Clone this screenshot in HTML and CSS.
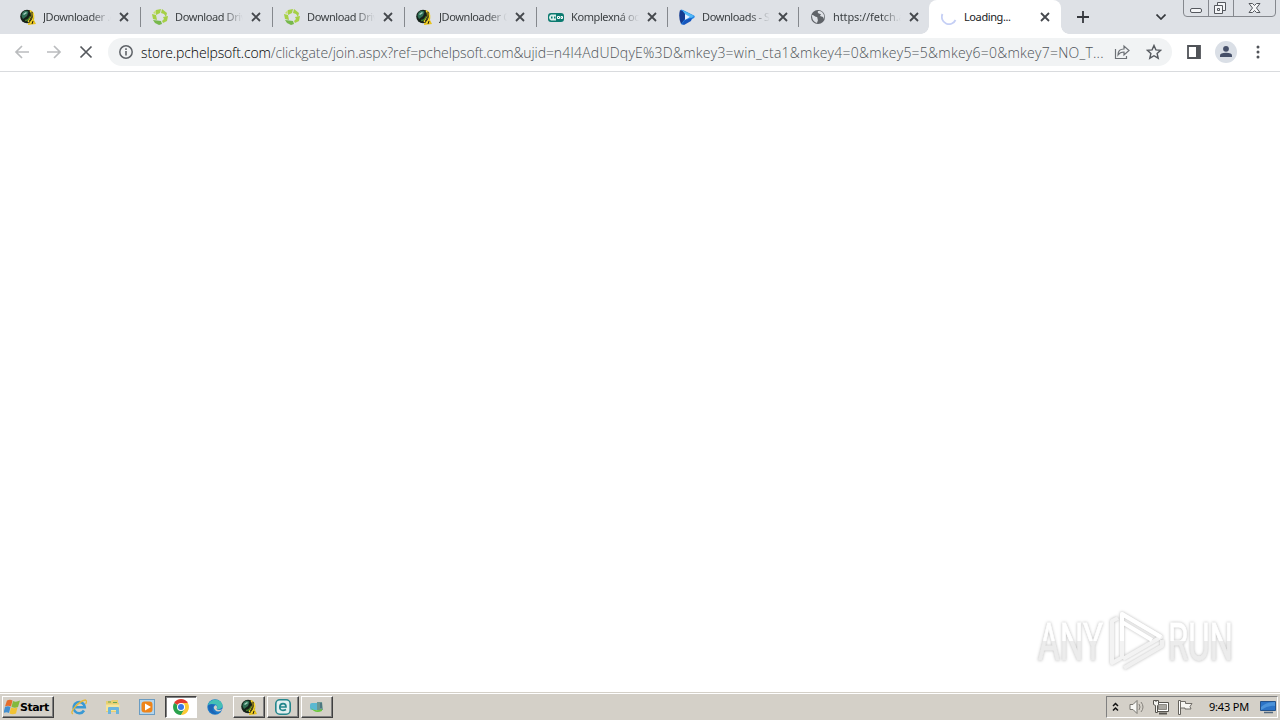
FILE: index.html
```html
<!DOCTYPE html>
<html lang="en">
<head>
    <meta charset="UTF-8">
    <title>Loading...</title>
    <link rel="stylesheet" href="styles.css">
</head>
<body>

<svg class="defs">
    <symbol id="close" viewBox="0 0 10 10"><path d="M1 1l8 8M9 1l-8 8" fill="none" stroke="#45484d" stroke-width="1.8"/></symbol>
    <symbol id="jd" viewBox="0 0 16 16">
        <path d="M9 1c5 0 6 6 5 10l2 4-8 1z" fill="#e8c21c"/>
        <circle cx="7" cy="7.500" r="6.800" fill="#152019"/>
        <path d="M1.500 7C2 1 7 1 8.500 3L7 7l-4 3z" fill="#2f6f55"/>
        <path d="M3 5l3-2 1 1-3 2z" fill="#a5d1c0"/>
        <path d="M5 11.500q4 0 5-4" fill="none" stroke="#3f7a28" stroke-width="1.500"/>
        <path d="M10 1.500c3 3 2 7-2 11.500M13 4c1.500 4 0 7-3 10" fill="none" stroke="#f5d52b" stroke-width="1.400"/>
        <path d="M12 3q1 4-2.500 9M12 15l1-3" fill="none" stroke="#24210b"/>
    </symbol>
    <symbol id="driver" viewBox="0 0 16 16">
        <g fill="#a5d046">
            <path d="M4 1l5-1-1 4-4 2z"/>
            <path d="M10 0l5 4-1 4-2-3-3-1z"/>
            <path d="M11 8l5-1-1 5-4 2-1-2 2-2z"/>
            <path d="M0 5l4 1 1 5-4-1z"/>
        </g>
        <path d="M1 11l4 .5 4 .5 1 3-3 1-4-2z" fill="#77b84b"/>
        <path d="M1 4l3-3-.5 4z" fill="#c5df6a"/>
    </symbol>
</svg>

<div class="browser">
    <div class="tabs">
        <div class="tab wide">
            <svg class="favicon"><use href="#jd"/></svg>
            <span class="title">JDownloader .org</span>
            <svg class="close"><use href="#close"/></svg>
        </div>
        <div class="tab wide">
            <svg class="favicon"><use href="#driver"/></svg>
            <span class="title">Download Driver</span>
            <svg class="close"><use href="#close"/></svg>
        </div>
        <div class="tab wide">
            <svg class="favicon"><use href="#driver"/></svg>
            <span class="title">Download Driver</span>
            <svg class="close"><use href="#close"/></svg>
        </div>
        <div class="tab wide">
            <svg class="favicon"><use href="#jd"/></svg>
            <span class="title">JDownloader Of</span>
            <svg class="close"><use href="#close"/></svg>
        </div>
        <div class="tab">
            <svg class="favicon" viewBox="0 0 16 16">
                <rect y="4" width="16" height="9" rx="3" fill="#0b7a70"/>
                <path d="M3 5.500h5v6H3q-2-1-2-3t2-3z" fill="#d9eeeb"/>
                <path d="M3 8.500h1.500M6 8.500h1.500" stroke="#0b7a70" stroke-width="2"/>
                <path d="M9.500 7.500h2v2h-2zM13 7.500h1.500v2H13z" fill="none" stroke="#fff"/>
            </svg>
            <span class="title">Komplexná ochr</span>
            <svg class="close"><use href="#close"/></svg>
        </div>
        <div class="tab">
            <svg class="favicon" viewBox="0 0 16 16">
                <path d="M2 1Q1 0 4 1l10 5q3 1 1 3L5 15q-3 2-3-1z" fill="#2687e8"/>
                <path d="M1 1l5 2v7l-4 5Q-1 8 1 1z" fill="#143b91"/>
                <path d="M3 1l12 6-3 2-6-4z" fill="#51b9f5"/>
                <path d="M6 5l5 3-5 3z" fill="#e3efff"/>
                <path d="M3 15l3-4 7-2-1 3-7 4z" fill="#1756bd"/>
            </svg>
            <span class="title">Downloads - Se</span>
            <svg class="close"><use href="#close"/></svg>
        </div>
        <div class="tab last">
            <svg class="favicon" viewBox="0 0 16 16">
                <circle cx="8" cy="8" r="7" fill="#5f6368"/>
                <path d="M2 6c2 0 3 2 5 2 1 1 0 2 1 3l-1 3C4 13 2 11 2 6zM8 2c-1 2 1 3 3 3l-1 2 3 1 1 2c1-4-1-7-4-8z" fill="#dee1e6"/>
            </svg>
            <span class="title loose">https://fetch.a</span>
            <svg class="close"><use href="#close"/></svg>
        </div>
        <div class="tab wide active">
            <svg class="favicon" viewBox="0 0 16 16"><path d="M1.500 5A7 7 0 1 0 14.500 11" fill="none" stroke="#c5cff5" stroke-width="1.800"/></svg>
            <span class="title">Loading...</span>
            <svg class="close"><use href="#close"/></svg>
        </div>
        <svg class="new-tab" viewBox="0 0 12 12"><path d="M6 0v12M0 6h12" stroke="#35383d" stroke-width="1.800"/></svg>
        <svg class="tab-search" viewBox="0 0 10 6"><path d="M0.500 0.500L5 5l4.500-4.500" fill="none" stroke="#35383d" stroke-width="1.700"/></svg>
        <svg class="window-buttons" viewBox="0 0 94 17">
            <path d="M0.500 0v13q0 3.500 3.500 3.500h85q3.500 0 3.500-3.500V0M25.500 0v16M50.500 0v16" fill="none" stroke="#85888e"/>
            <g fill="#f4f5f7" stroke="#55585e">
                <rect x="7.500" y="8.500" width="11" height="4" rx="1.500"/>
                <path d="M34.500 2.500h8v8h-8z"/>
                <path d="M31.500 5.500h8v8h-8zM34.500 8.500h2v2h-2z"/>
                <path d="M66 3.500h3.500l2 2 2-2H77l-3.500 4.500 3.500 4.500h-3.500l-2-2-2 2H66l3.500-4.500z"/>
            </g>
        </svg>
    </div>

    <div class="toolbar">
        <svg class="nav" viewBox="0 0 16 16"><path d="M15 8H2M8 2L2 8l6 6" fill="none" stroke="#babcbe" stroke-width="1.700"/></svg>
        <svg class="nav" viewBox="0 0 16 16"><path d="M1 8h13M8 2l6 6-6 6" fill="none" stroke="#babcbe" stroke-width="1.700"/></svg>
        <svg class="nav stop" viewBox="0 0 16 16"><path d="M2.500 2.500l11 11M13.500 2.500l-11 11" stroke="#55585d" stroke-width="1.700"/></svg>
        <div class="omnibox">
            <svg class="info" viewBox="0 0 16 16"><circle cx="8" cy="8" r="6.200" fill="none" stroke="#5f6368" stroke-width="1.500"/><path d="M8 7v4.500M8 4.300v1.700" stroke="#5f6368" stroke-width="1.600"/></svg>
            <div class="url"><span class="host">store.pchelpsoft.com</span><span class="path">/clickgate/join.aspx?ref=pchelpsoft.com&amp;ujid=</span><span class="query">n4l4AdUDqyE%3D&amp;mkey3=win_cta1&amp;mkey4=0&amp;mkey5=5&amp;mkey6=0&amp;mkey7=NO_T...</span></div>
            <svg class="action" viewBox="0 0 16 16"><path d="M1.500 5v9.500h11V12M4 11q0-6 6-6V2l5 4.500-5 4.500V8q-4 0-6 3z" fill="none" stroke="#6d7176" stroke-width="1.200"/></svg>
            <svg class="action" viewBox="0 0 16 16"><path d="M8 1.500l1.900 4.400 4.800.4-3.600 3.200 1.100 4.700L8 11.700l-4.200 2.500 1.100-4.700-3.600-3.200 4.800-.4z" fill="none" stroke="#55595e" stroke-width="1.400"/></svg>
        </div>
        <svg class="panel" viewBox="0 0 14 14"><path d="M1 1h12v12H1z" fill="none" stroke="#505358" stroke-width="1.800"/><path d="M9 1h4v12H9z" fill="#505358"/></svg>
        <svg class="avatar" viewBox="0 0 22 22"><circle cx="11" cy="11" r="11" fill="#dadfe6"/><circle cx="11" cy="7.800" r="2.900" fill="#465069"/><path d="M5 16v-1.500q0-2.700 6-2.700t6 2.700V16z" fill="#465069"/></svg>
        <svg class="menu" viewBox="0 0 4 14"><g fill="#505358"><circle cx="2" cy="2" r="1.500"/><circle cx="2" cy="7" r="1.500"/><circle cx="2" cy="12" r="1.500"/></g></svg>
    </div>

    <div class="page">
        <svg class="watermark" viewBox="0 0 210 72">
            <defs>
                <linearGradient id="fade" x1="0" y1="0" x2="0" y2="72" gradientUnits="userSpaceOnUse">
                    <stop offset="0.480" stop-color="#fff"/>
                    <stop offset="0.480" stop-color="#ececec"/>
                </linearGradient>
            </defs>
            <g class="letters" fill="url(#fade)" stroke="url(#fade)">
                <text x="8" y="54" textLength="65" lengthAdjust="spacingAndGlyphs">ANY</text>
                <text x="138" y="54" textLength="65" lengthAdjust="spacingAndGlyphs">RUN</text>
            </g>
            <g fill="none" stroke-width="4" stroke-linejoin="round">
                <path d="M88 12l-6 3v42l9-5" stroke="#f3f3f3"/>
                <path d="M94 62l38-22v-6" stroke="#f0f0f0"/>
                <path d="M92 53V8l39 23-38 22" stroke="#f3f3f3"/>
                <path d="M92 35V8l39 23M92 16l30 18" stroke="#fff"/>
            </g>
        </svg>
    </div>
</div>

<div class="taskbar">
    <div class="start">
        <svg viewBox="0 0 16 16">
            <path d="M3 1.500q3-1.500 5.500 0L7 7.500q-3-1.500-6 0z" fill="#e56d2c"/>
            <path d="M9 2q3 1.500 7-.5l-2 6.500q-3 1.500-6.500 0z" fill="#83b93d"/>
            <path d="M1 8q3-1.500 5.500 0L5 14q-2.500-1.500-5.500 0z" fill="#438fd0"/>
            <path d="M7 8.500q3 1.500 6.500 0L12 14.500q-3.500 1.500-6.500 0z" fill="#f2c334"/>
        </svg>
        <span>Start</span>
    </div>
    <div class="task">
        <svg viewBox="0 0 16 16">
            <path d="M13 11.500a5.600 5.600 0 1 1 .8-3.200H4" fill="none" stroke="#3999d4" stroke-width="2.600"/>
            <path d="M2 15Q-1 14 4 8t10.500-7q2 1 0 4" fill="none" stroke="#e4b83b" stroke-width="1.300"/>
        </svg>
    </div>
    <div class="task">
        <svg viewBox="0 0 16 16">
            <path d="M1 2h5l1-1h6v3h1v9H1z" fill="#e8cf70"/>
            <path d="M3 3h3M8 3.500h4" stroke="#67a553"/>
            <path d="M1 5.500h13.500v6.500H1z" fill="#f5e59a"/>
            <path d="M3 15V9q0-1 1-1h9q1 0 1 1v6h-3v-4H6v4z" fill="#6bb5dd"/>
        </svg>
    </div>
    <div class="task">
        <svg viewBox="0 0 16 16">
            <rect x="0.500" y="0.500" width="15" height="15" fill="#b4d5ec" stroke="#6a9cc2"/>
            <rect x="2.500" y="2.500" width="11" height="11" rx="3" fill="#ee8419"/>
            <path d="M6 4.500l6 3.500-6 3.500z" fill="#fff"/>
        </svg>
    </div>
    <div class="task pressed">
        <svg viewBox="0 0 16 16">
            <path d="M8 8L1.100 4A8 8 0 0 1 14.900 4z" fill="#e33b2e"/>
            <path d="M8 8L1.100 4A8 8 0 0 0 8 16l4-6z" fill="#2ba24c"/>
            <path d="M8 4h6.900A8 8 0 0 1 8 16l4-7z" fill="#fcc934"/>
            <circle cx="8" cy="8" r="4" fill="#fff"/>
            <circle cx="8" cy="8" r="3" fill="#3978e6"/>
        </svg>
    </div>
    <div class="task">
        <svg viewBox="0 0 16 16">
            <circle cx="8" cy="8" r="7.700" fill="#1b79c9"/>
            <path d="M1 6C3-1 14-1 15.500 6c.5 4-4 5-6 4 2-3 0-5-3-5Q3 5 1 6z" fill="#44bfb5"/>
            <path d="M9 6q-4 2-1 5t7 0l1 1v-2q-5 2-6.500 0Q11 8 9 6z" fill="#d4d0c8"/>
            <path d="M1 7q3-3 6-1-4 5 3 9-7 1-9-8z" fill="#1e65b4"/>
        </svg>
    </div>
    <div class="task raised"><svg><use href="#jd"/></svg></div>
    <div class="task raised">
        <svg viewBox="0 0 16 16">
            <rect x="0.800" y="0.800" width="14.400" height="14.400" rx="4" fill="#e3eff0" stroke="#24868c" stroke-width="1.600"/>
            <path d="M5 8h6q0-3.300-3-3.300T4.800 8 8 11.300q1.500 0 3-.8" fill="none" stroke="#24868c" stroke-width="1.700"/>
        </svg>
    </div>
    <div class="task raised">
        <svg viewBox="0 0 16 16">
            <rect x="1" y="4" width="9" height="7" rx="2" fill="#5bb9d2"/>
            <path d="M8 3h5l1 8H8z" fill="#6a9793"/>
            <path d="M2 9q4 4 11 1v2q-7 3-11-3z" fill="#69c83b"/>
            <path d="M12 4v5" stroke="#31576e"/>
        </svg>
    </div>
    <div class="tray">
        <svg class="chevrons" viewBox="0 0 7 10"><path d="M1 4l2.500-2.500L6 4M1 8.500L3.500 6 6 8.500" fill="none" stroke="#111" stroke-width="1.500"/></svg>
        <svg class="tray-icon" viewBox="0 0 16 16"><path d="M1 5.500h3l4-4v13l-4-4H1z" fill="#f8f8f5" stroke="#77756f"/><path d="M10 5q2 3 0 6M12 3q4 5 0 10" fill="none" stroke="#85827c"/></svg>
        <svg class="tray-icon" viewBox="0 0 16 16"><path d="M3.500 3.500h12v9h-12z" fill="#fff" stroke="#57554f"/><path d="M5.500 5.500h8v5h-8z" fill="#aaa8a2" stroke="#8c8a84"/><path d="M6 14.500h8" stroke="#57554f" stroke-width="2"/><path d="M0.500 1.500h5v4l-1 1v7h-2v-7l-2-1z" fill="#f4f4f0" stroke="#57554f"/><path d="M3 1v2" stroke="#57554f"/></svg>
        <svg class="tray-icon" viewBox="0 0 16 16"><path d="M1.500 1.500h2v14h-2z" fill="#fff" stroke="#65625c"/><path d="M3.500 2.500h5v2h6.500l-2 3 1 2.500H8V9H3.500z" fill="#f7f6f2" stroke="#716e68"/></svg>
        <span class="clock">9:43 PM</span>
        <svg class="desktop" viewBox="0 0 16 14"><path d="M0.500 1.500h15v9h-15z" fill="#2b73c6" stroke="#23528b"/><path d="M1 7q5-5 14-5v4Q8 5 1 10z" fill="#4b93da"/><path d="M4 12.500h9" stroke="#53687e" stroke-width="1.500"/></svg>
    </div>
</div>

</body>
</html>
```

FILE: styles.css
```css
* {
    box-sizing: border-box;
}
body {
    margin: 0;
    height: 720px;
    display: flex;
    flex-direction: column;
    overflow: hidden;
    background: #fff;
    font-family: "Noto Sans", sans-serif;
}
svg {
    display: block;
    flex: none;
}
.defs {
    display: none;
}
.browser {
    flex: 1;
    display: flex;
    flex-direction: column;
}
.tabs {
    height: 34px;
    display: flex;
    align-items: center;
    padding-left: 8px;
    background: #dee1e6;
}
.tab {
    position: relative;
    width: 131px;
    height: 34px;
    flex: none;
    display: flex;
    align-items: center;
    padding-left: 12px;
}
.tab.wide {
    width: 132px;
}
.tab::after {
    content: "";
    position: absolute;
    right: -1px;
    top: 7px;
    width: 1px;
    height: 20px;
    background: #85888d;
}
.tab.last::after {
    display: none;
}
.favicon {
    width: 16px;
    height: 16px;
}
.title {
    width: 68px;
    margin-left: 7px;
    overflow: hidden;
    white-space: nowrap;
    font-size: 11px;
    line-height: 16px;
    letter-spacing: -0.4px;
    color: #3c4043;
    -webkit-mask-image: linear-gradient(to right, #000 70%, transparent);
    mask-image: linear-gradient(to right, #000 70%, transparent);
}
.title.loose {
    letter-spacing: -0.1px;
}
.close {
    width: 10px;
    height: 10px;
    margin-left: 8px;
}
.tab.active {
    background: #fff;
    border-radius: 8px 8px 0 0;
}
.tab.active::before,
.tab.active::after {
    content: "";
    position: absolute;
    top: auto;
    bottom: 0;
    width: 8px;
    height: 8px;
}
.tab.active::before {
    left: -8px;
    background: radial-gradient(circle at 0 0, transparent 7.5px, #fff 8px);
}
.tab.active::after {
    right: -8px;
    background: radial-gradient(circle at 100% 0, transparent 7.5px, #fff 8px);
}
.tab.active .title {
    color: #202124;
    -webkit-mask-image: none;
    mask-image: none;
}
.new-tab {
    width: 12px;
    height: 12px;
    margin-left: 16px;
}
.tab-search {
    width: 10px;
    height: 6px;
    margin-left: 67px;
}
.window-buttons {
    width: 94px;
    height: 17px;
    margin-left: 17px;
    align-self: flex-start;
}
.toolbar {
    height: 38px;
    display: flex;
    align-items: center;
    padding-left: 14px;
    padding-bottom: 1px;
    border-bottom: 1px solid #d9dbde;
}
.nav {
    width: 16px;
    height: 16px;
    margin-right: 16px;
}
.stop {
    margin-right: 14px;
}
.omnibox {
    width: 1064px;
    height: 28px;
    display: flex;
    align-items: center;
    padding-left: 10px;
    border-radius: 14px;
    background: #f1f3f4;
}
.info {
    width: 16px;
    height: 16px;
}
.url {
    width: 967px;
    margin-left: 7px;
    padding-top: 2px;
    display: flex;
    white-space: nowrap;
    font-family: "Open Sans", sans-serif;
    font-weight: 300;
    font-size: 14px;
    line-height: 20px;
    color: #4f5358;
}
.host {
    letter-spacing: -0.14px;
    color: #000;
}
.path {
    letter-spacing: -0.09px;
}
.query {
    letter-spacing: 0.24px;
}
.action {
    width: 16px;
    height: 16px;
    margin-left: 6px;
}
.action + .action {
    margin-left: 16px;
}
.panel {
    width: 14px;
    height: 14px;
    margin-left: 15px;
}
.avatar {
    width: 22px;
    height: 22px;
    margin-left: 14px;
}
.menu {
    width: 4px;
    height: 14px;
    margin-left: 19px;
}
.page {
    flex: 1;
    display: flex;
    align-items: flex-end;
    justify-content: flex-end;
    padding: 0 40px 14px 0;
}
.watermark {
    width: 210px;
    height: 72px;
    filter: drop-shadow(0 0 1.5px #bbb);
}
.letters {
    font-family: Roboto, sans-serif;
    font-size: 51px;
    stroke-width: 0.8px;
}
.taskbar {
    height: 28px;
    display: flex;
    align-items: center;
    padding: 1px 2px 0 2px;
    border-top: 1px solid #d4d0c8;
    box-shadow: inset 0 1px #fff;
    background: #d4d0c8;
}
.start,
.raised {
    border: 1px solid;
    border-color: #fff #404040 #404040 #fff;
    box-shadow: inset -1px -1px #808080;
}
.start {
    width: 52px;
    height: 22px;
    display: flex;
    align-items: center;
    margin-right: 9px;
    padding-left: 1px;
    font-family: "DejaVu Sans", sans-serif;
    font-weight: bold;
    font-size: 11px;
    letter-spacing: -0.5px;
    color: #000;
}
.start svg {
    width: 16px;
    height: 16px;
}
.task {
    width: 32px;
    height: 22px;
    margin-right: 2px;
    display: flex;
    align-items: center;
    justify-content: center;
}
.task svg {
    width: 16px;
    height: 16px;
}
.pressed {
    border: 1px solid;
    border-color: #404040 #fff #fff #404040;
    box-shadow: inset 1px 1px #808080;
    background: #fff;
}
.tray {
    width: 172px;
    height: 22px;
    margin-left: auto;
    display: flex;
    align-items: center;
    padding-left: 5px;
    border: 1px solid;
    border-color: #808080 #fff #fff #808080;
}
.chevrons {
    width: 7px;
    height: 10px;
    margin-right: 10px;
}
.tray-icon {
    width: 16px;
    height: 16px;
    margin-right: 8px;
}
.clock {
    width: 51px;
    margin-left: 8px;
    font-size: 11px;
    line-height: 16px;
    letter-spacing: -0.2px;
    white-space: nowrap;
    color: #000;
}
.desktop {
    width: 16px;
    height: 14px;
}
```
